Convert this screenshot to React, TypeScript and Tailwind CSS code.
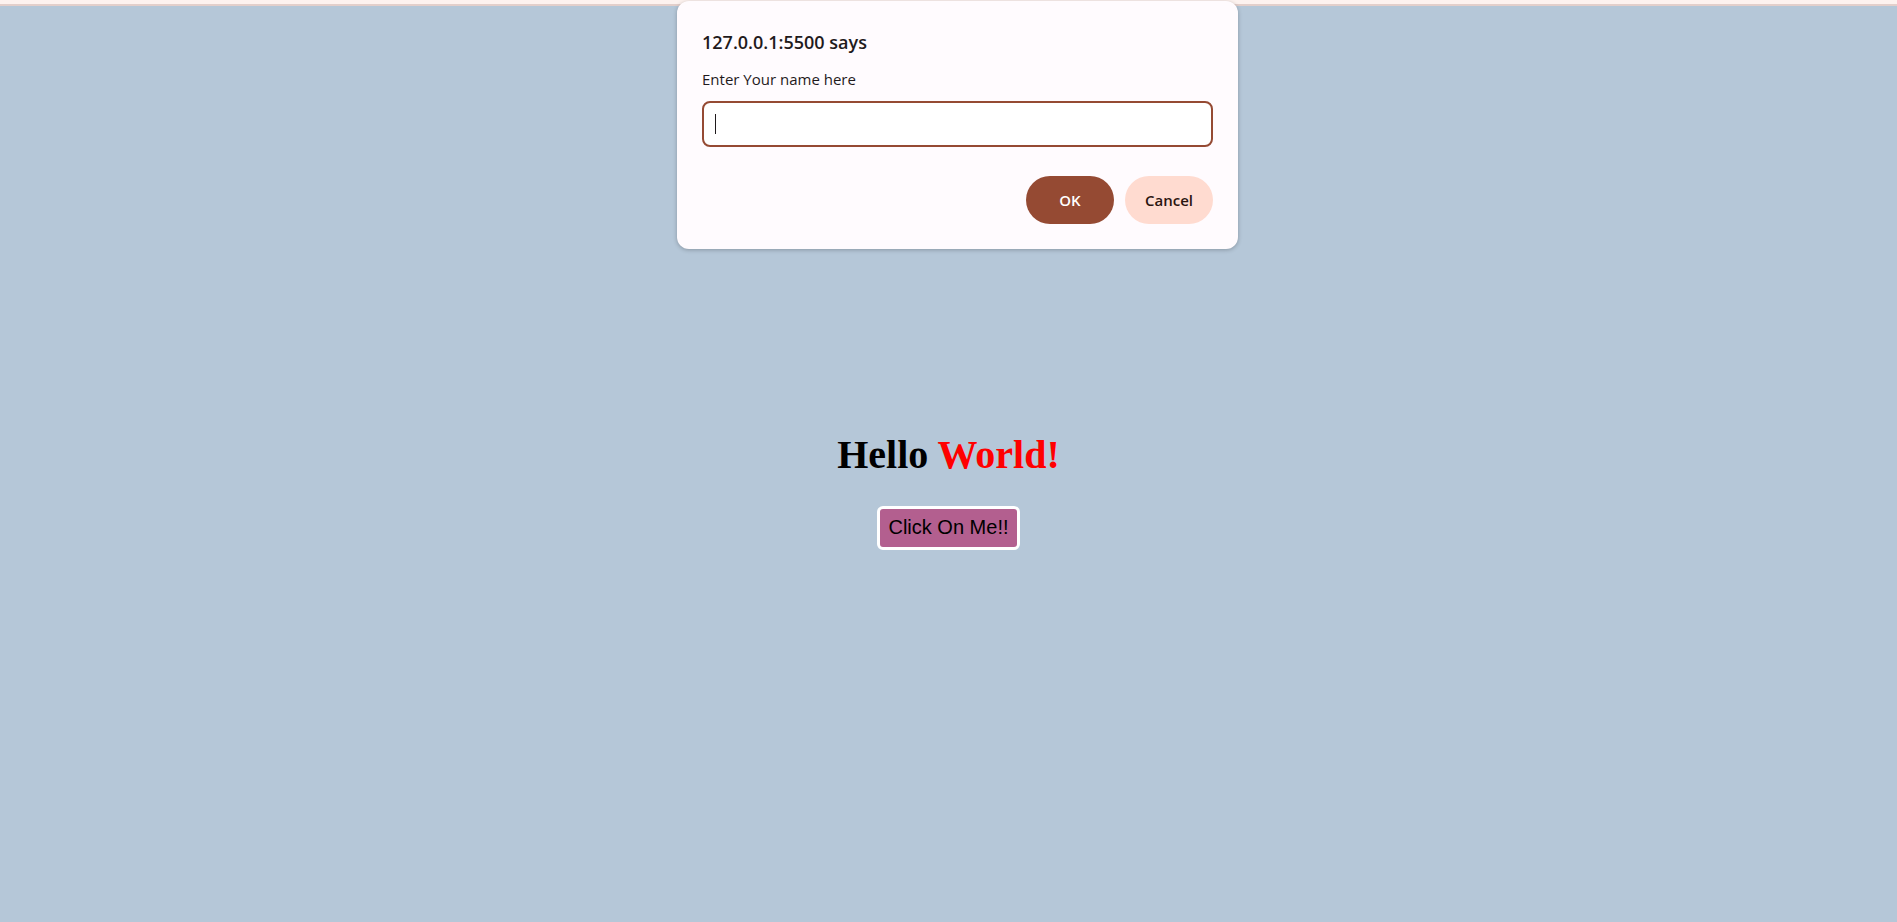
export default function App() {
  return (
    <div className="relative min-h-[922px] bg-[#b5c7d8] font-['Liberation_Serif',serif]">
      {/* Top strip of the page behind the prompt */}
      <div className="h-[4px] bg-[#fdf2ef]" />
      <div className="h-[2px] bg-[#e3cfcb]" />

      {/* Page content */}
      <div className="flex flex-col items-center pt-[427px]">
        <h1 className="text-[40px] font-bold leading-[44px] text-black">
          Hello <span className="text-[#ff0000]">World!</span>
        </h1>
        <button className="mt-[29px] rounded-[6px] border-[3px] border-white bg-[#b35f8f] px-[8px] pb-[8px] pt-[7px] font-['Liberation_Sans',Arial,sans-serif] text-[20px] leading-[23px] text-black">
          Click On Me!!
        </button>
      </div>

      {/* Browser prompt dialog */}
      <div className="absolute left-[677px] top-[1px] w-[561px] rounded-[12px] bg-[#fffbfe] px-[25px] pb-[25px] pt-[29px] font-['Open_Sans',sans-serif] shadow-[0_1px_4px_rgba(0,0,0,0.25)]">
        <div className="text-[18px] font-semibold leading-[24px] text-[#1f1a1c]">
          127.0.0.1:5500 says
        </div>
        <div className="mt-[15px] text-[15px] leading-[20px] text-[#1f1a1c]">
          Enter Your name here
        </div>
        <div className="mt-[12px] flex h-[46px] items-center rounded-[8px] border-2 border-[#954a33] bg-white px-[11px]">
          <div className="h-[20px] w-px bg-[#1f1a1c]" />
        </div>
        <div className="mt-[29px] flex justify-end gap-[11px]">
          <button className="h-[48px] w-[88px] rounded-full bg-[#954a33] text-[15px] font-semibold text-white">
            OK
          </button>
          <button className="h-[48px] w-[88px] rounded-full bg-[#ffdbd0] text-[15px] font-semibold text-[#2b1510]">
            Cancel
          </button>
        </div>
      </div>
    </div>
  );
}
